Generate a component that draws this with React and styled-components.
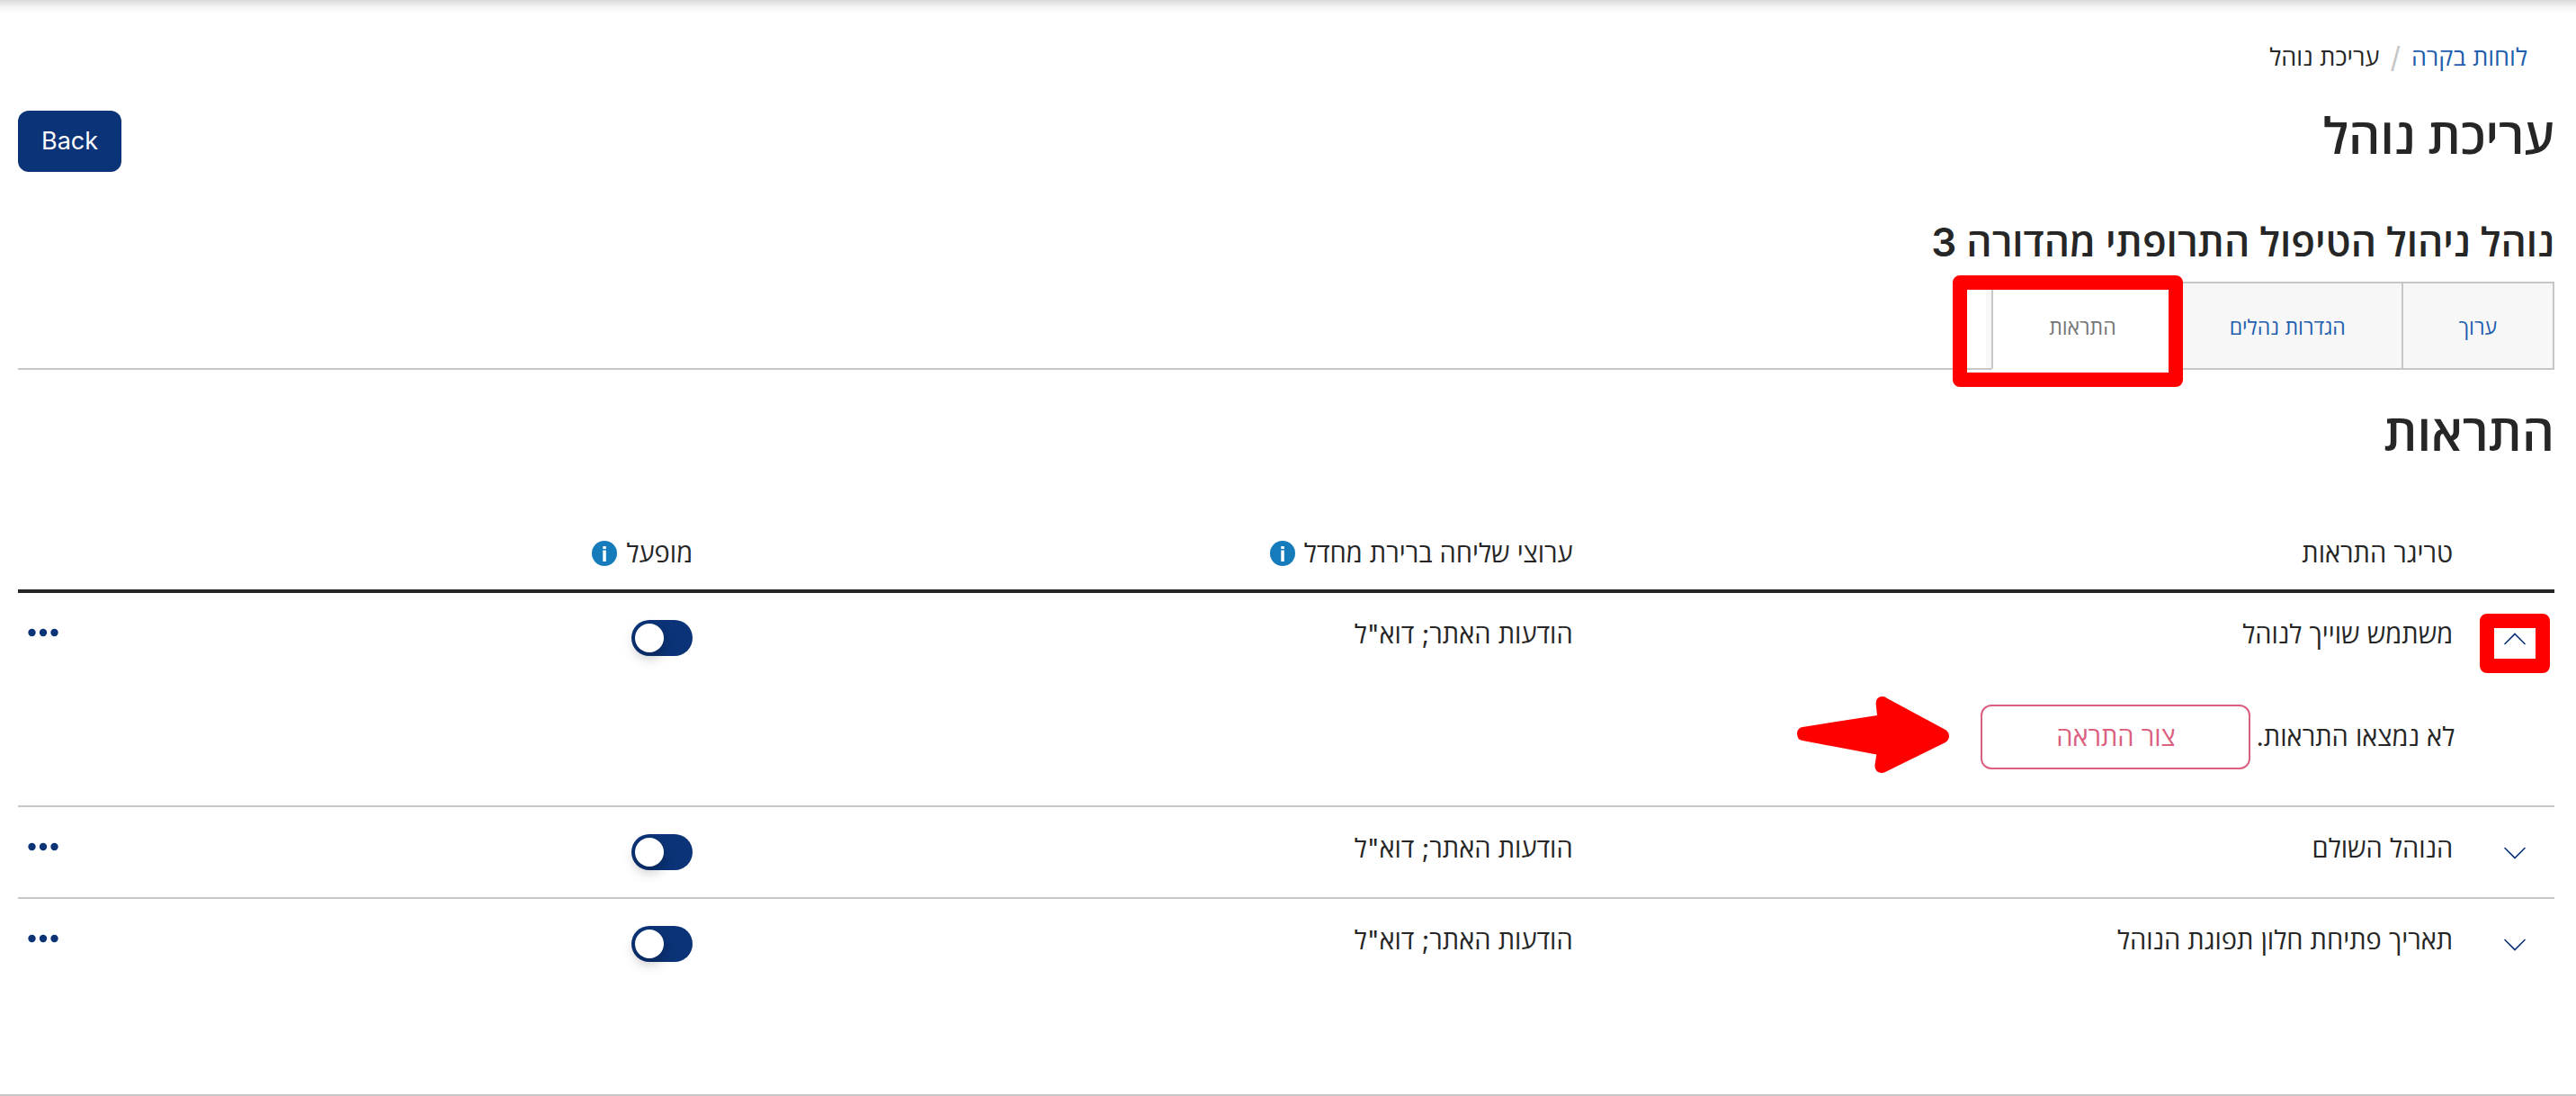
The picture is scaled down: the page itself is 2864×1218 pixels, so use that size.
import { useState } from "react";
import styled, { createGlobalStyle, css } from "styled-components";

const GlobalStyle = createGlobalStyle`
  * {
    box-sizing: border-box;
  }
  body {
    margin: 0;
    background: #fff;
    color: #262626;
    font-family: Inter, "Open Sans", "Noto Sans", sans-serif;
    font-size: 29px;
    line-height: 40px;
  }
  button {
    font: inherit;
    cursor: pointer;
  }
`;

const Page = styled.div`
  min-height: 100vh;
  display: flex;
  flex-direction: column;
  border-bottom: 2px solid #c7c7c7;
`;

const TopShadow = styled.div`
  height: 16px;
  background: linear-gradient(#d9d9d9, #f4f4f4 45%, #fff);
`;

const Content = styled.main`
  padding: 28px 24px 0 20px;
`;

const Breadcrumb = styled.nav`
  display: flex;
  gap: 12px;
  padding: 0 30px;
  font-size: 27px;
  a {
    color: #1f5fae;
    text-decoration: none;
  }
  .slash {
    color: #c7c7c7;
    font-size: 32px;
  }
`;

const TitleRow = styled.div`
  display: flex;
  justify-content: space-between;
  align-items: flex-start;
  height: 68px;
  margin-top: 39px;
`;

const Title = styled.h1`
  margin: 0;
  font-size: 55px;
  line-height: 56px;
  font-weight: 600;
`;

const BackButton = styled.button`
  height: 68px;
  padding: 0 26px;
  border: 0;
  border-radius: 12px;
  background: #0b3377;
  color: #fff;
  font-size: 27px;
`;

const Subtitle = styled.h2`
  margin: 48px 0 14px;
  font-size: 44px;
  line-height: 60px;
  font-weight: 600;
`;

const Tabs = styled.div`
  display: flex;
  height: 98px;
  border-bottom: 2px solid #c7c7c7;
`;

const Tab = styled.button`
  position: relative;
  height: 98px;
  padding: 3px 62px 0;
  border: 2px solid #c7c7c7;
  border-right-width: ${({ $first }) => ($first ? "2px" : "0")};
  background: #f7f7f7;
  color: #1f5fae;
  font-size: 23px;
  ${({ $active }) => $active && css`
    border-bottom-color: #fff;
    background: #fff;
    color: #757575;
  `}
`;

const TabEdge = styled.span`
  width: 6px;
  height: 96px;
  border-top: 2px solid #c7c7c7;
  background: #f7f7f7;
`;

const SectionTitle = styled.h2`
  margin: 36px 0 80px;
  font-size: 56px;
  line-height: 68px;
  font-weight: 600;
`;

const Table = styled.table`
  width: 100%;
  table-layout: fixed;
  border-collapse: separate;
  border-spacing: 0;
  th, td {
    padding: 0;
    text-align: right;
    vertical-align: top;
    font-weight: 400;
  }
  th {
    height: 64px;
    border-bottom: 4px solid #232624;
  }
  .toggle {
    width: 4%;
  }
  .wide {
    width: 34.7%;
  }
`;

const HeadLabel = styled.span`
  display: flex;
  align-items: center;
  gap: 10px;
  height: 40px;
`;

const Row = styled.tr`
  && td {
    height: ${({ $lined }) => ($lined ? "102px" : "100px")};
    padding-top: 26px;
    border-bottom: ${({ $lined }) => ($lined ? "2px solid #c7c7c7" : "0")};
  }
`;

const ExpandButton = styled.button`
  position: relative;
  display: flex;
  align-items: center;
  justify-content: center;
  width: 46px;
  height: 50px;
  margin-right: 21px;
  padding: 0;
  border: 0;
  background: none;
`;

const Switch = styled.input`
  appearance: none;
  display: block;
  width: 68px;
  height: 40px;
  margin: 4px 0 0;
  padding: 4px;
  border-radius: 20px;
  background: #0b3377;
  cursor: pointer;
  &::before {
    content: "";
    display: block;
    width: 32px;
    height: 32px;
    border-radius: 50%;
    background: #fff;
    box-shadow: 0 6px 14px rgba(0, 0, 0, 0.25);
  }
  &:not(:checked) {
    background: #8b969e;
  }
  &:checked::before {
    margin-right: 28px;
  }
`;

const MoreButton = styled.button`
  display: flex;
  align-items: center;
  height: 36px;
  margin: 0 auto 0 8px;
  padding: 0;
  border: 0;
  background: none;
`;

const DetailCell = styled.td`
  height: 138px;
  border-bottom: 2px solid #c7c7c7;
`;

const Empty = styled.div`
  display: flex;
  align-items: center;
  gap: 6px;
  padding-top: 24px;
  margin-right: -2px;
`;

const CreateButton = styled.button`
  position: relative;
  width: 300px;
  height: 72px;
  border: 2px solid #db6080;
  border-radius: 12px;
  background: #fff;
  color: #db6080;
`;

// Red marks drawn over the page
const Frame = styled.span`
  position: absolute;
  inset: ${({ $inset }) => $inset};
  border: 16px solid #f00;
  border-radius: 8px;
  pointer-events: none;
`;

const ArrowMark = styled.svg`
  position: absolute;
  top: -11px;
  right: 333px;
  width: 170px;
  height: 86px;
`;

const InfoIcon = () => (
  <svg width="28" height="28" viewBox="0 0 28 28" role="img" aria-label="מידע">
    <circle cx="14" cy="14" r="14" fill="#157bbb" />
    <path d="M12.3 6h3.5v3h-3.5zM12.3 10.6h3.5V23h-3.5z" fill="#fff" />
  </svg>
);

const Chevron = ({ up }) => (
  <svg width="24" height="14" viewBox="0 0 24 14" fill="none" stroke="#0b3377" strokeWidth="1.6" strokeLinecap="round">
    <path d={up ? "M1 12.5 12 1.5 23 12.5" : "M1 1.5 12 12.5 23 1.5"} />
  </svg>
);

const Dots = () => (
  <svg width="40" height="10" viewBox="0 0 40 10" fill="#0b3377">
    <circle cx="7.5" cy="5" r="4.2" />
    <circle cx="20" cy="5" r="4.2" />
    <circle cx="32.5" cy="5" r="4.2" />
  </svg>
);

const tabs = ["ערוך", "הגדרות נהלים", "התראות"];

const triggers = [
  { id: 1, name: "משתמש שוייך לנוהל", channels: 'הודעות האתר; דוא"ל' },
  { id: 2, name: "הנוהל השולם", channels: 'הודעות האתר; דוא"ל' },
  { id: 3, name: "תאריך פתיחת חלון תפוגת הנוהל", channels: 'הודעות האתר; דוא"ל' },
];

function TriggerRow({ data, isOpen, isLast, onToggle }) {
  const [enabled, setEnabled] = useState(true);

  return (
    <>
      <Row $lined={!isOpen && !isLast}>
        <td>
          <ExpandButton aria-expanded={isOpen} aria-label={data.name} onClick={onToggle}>
            <Chevron up={isOpen} />
            {data.id === 1 ? <Frame $inset="-3px -16px -13px -16px" /> : null}
          </ExpandButton>
        </td>
        <td>{data.name}</td>
        <td>{data.channels}</td>
        <td>
          <Switch
            type="checkbox"
            role="switch"
            aria-label={`מופעל: ${data.name}`}
            checked={enabled}
            onChange={() => setEnabled(prev => !prev)}
          />
        </td>
        <td>
          <MoreButton aria-label="פעולות"><Dots /></MoreButton>
        </td>
      </Row>
      {isOpen ? (
        <tr>
          <DetailCell />
          <DetailCell colSpan={4}>
            <Empty>
              <span>לא נמצאו התראות.</span>
              <CreateButton>
                צור התראה
                <ArrowMark viewBox="0 0 170 86" aria-hidden="true">
                  <path
                    d="M7 34 90 21 88.7 9Q88 0 96 0 99 0 101 2L166 37Q170 40 170 44 170 48 166 51L101 83Q98 85 95 85 87 84 87.5 76L89.3 64.5 7 49Q1 48 1 41.5 1 35 7 34Z"
                    fill="#f00"
                  />
                </ArrowMark>
              </CreateButton>
            </Empty>
          </DetailCell>
        </tr>
      ) : null}
    </>
  );
}

export default function App() {
  const [activeTab, setActiveTab] = useState(2);
  const [openId, setOpenId] = useState(1);

  return (
    <Page dir="rtl" lang="he">
      <GlobalStyle />
      <TopShadow />
      <Content>
        <Breadcrumb>
          <a href="#dashboards">לוחות בקרה</a>
          <span className="slash">/</span>
          <span>עריכת נוהל</span>
        </Breadcrumb>
        <TitleRow>
          <Title>עריכת נוהל</Title>
          <BackButton>Back</BackButton>
        </TitleRow>
        <Subtitle>נוהל ניהול הטיפול התרופתי מהדורה 3</Subtitle>
        <Tabs role="tablist">
          {tabs.map((name, i) => (
            <Tab
              key={name}
              role="tab"
              aria-selected={activeTab === i}
              $first={i === 0}
              $active={activeTab === i}
              onClick={() => setActiveTab(i)}
            >
              {name}
              {i === 2 ? <Frame $inset="-9px -12px -21px -45px" /> : null}
            </Tab>
          ))}
          <TabEdge />
        </Tabs>
        <SectionTitle>התראות</SectionTitle>
        <Table>
          <thead>
            <tr>
              <th className="toggle" aria-label="הרחבה" />
              <th className="wide"><HeadLabel>טריגר התראות</HeadLabel></th>
              <th className="wide"><HeadLabel>ערוצי שליחה ברירת מחדל <InfoIcon /></HeadLabel></th>
              <th><HeadLabel>מופעל <InfoIcon /></HeadLabel></th>
              <th aria-label="פעולות" />
            </tr>
          </thead>
          <tbody>
            {triggers.map((data, i) => (
              <TriggerRow
                key={data.id}
                data={data}
                isOpen={openId === data.id}
                isLast={i === triggers.length - 1}
                onToggle={() => setOpenId(openId === data.id ? null : data.id)}
              />
            ))}
          </tbody>
        </Table>
      </Content>
    </Page>
  );
}
